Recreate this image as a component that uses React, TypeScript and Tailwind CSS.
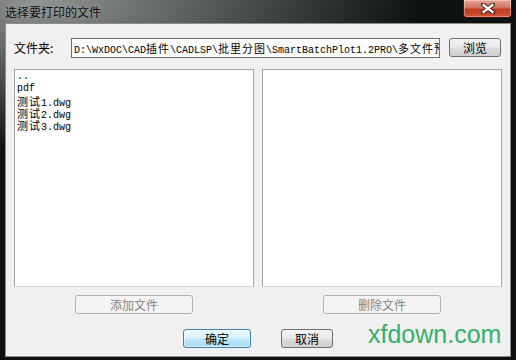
import React from "react";

const cjk = /([\u3400-\u9fff]+)/;

function Mixed({ text }: { text: string }) {
  const parts = text.split(cjk).filter((p) => p.length > 0);
  return (
    <>
      {parts.map((p, i) =>
        cjk.test(p) ? (
          <span key={i} className="shrink-0 leading-[12px] tracking-[1px] font-['Noto_Sans_CJK_SC',sans-serif] text-[11px]">
            {p}
          </span>
        ) : (
          <span key={i} className="shrink-0 leading-[12px] font-['Liberation_Mono',monospace] text-[10px]">
            {p}
          </span>
        )
      )}
    </>
  );
}

function WinButton({
  label,
  width,
  disabled,
  focused,
}: {
  label: string;
  width: string;
  disabled?: boolean;
  focused?: boolean;
}) {
  let cls =
    "border-[#707070] bg-[linear-gradient(#f2f2f2_0%,#ebebeb_48%,#dddddd_52%,#cfcfcf_100%)] text-black";
  if (disabled) cls = "border-[#adb2b5] bg-[#f4f4f4] text-[#838383]";
  if (focused)
    cls =
      "border-[#3c7fb1] bg-[linear-gradient(#eaf6fd_0%,#d9f0fc_48%,#bee6fd_52%,#a7d9f5_100%)] text-black shadow-[inset_0_0_0_1px_rgba(255,255,255,0.6)]";
  return (
    <div
      className={`${width} h-[19px] flex items-center justify-center rounded-[3px] border text-[12px] leading-none font-['Noto_Sans_CJK_SC',sans-serif] ${cls}`}
    >
      {label}
    </div>
  );
}

const files = ["..", "pdf", "测试1.dwg", "测试2.dwg", "测试3.dwg"];

export default function App() {
  return (
    <div className="w-[516px] h-[360px] flex flex-col overflow-hidden bg-[radial-gradient(ellipse_380px_150px_at_40px_0px,#8f9392_0%,#5c605f_40%,#0d1111_100%)]">
      {/* title bar */}
      <div className="h-[23px] flex items-start justify-between pl-[5px] pr-[4px]">
        <span className="mt-[5px] text-[12px] leading-[14px] text-[#101010] font-['Noto_Sans_CJK_SC',sans-serif] [text-shadow:0_0_6px_rgba(255,255,255,0.35)]">
          选择要打印的文件
        </span>
        <div className="w-[49px] h-[18px] rounded-b-[4px] border border-t-0 border-[#4a1208] bg-[linear-gradient(#e8a597_0%,#d27360_45%,#c0391f_55%,#d2553a_100%)] shadow-[inset_0_0_0_1px_rgba(255,255,255,0.35)] flex items-center justify-center">
          <svg width="14" height="11" viewBox="0 0 14 11">
            <path d="M2 1.5 L12 9.5 M12 1.5 L2 9.5" stroke="#3a0d05" strokeWidth="4.2" strokeLinecap="square" />
            <path d="M2.5 2 L11.5 9 M11.5 2 L2.5 9" stroke="#ffffff" strokeWidth="2.4" strokeLinecap="square" />
          </svg>
        </div>
      </div>

      {/* client area */}
      <div className="mx-[5px] h-[334px] border border-[#8c8c8c] bg-[#f0f0f0] flex flex-col">
        <div className="mt-[13px] h-[21px] flex items-center pl-[8px]">
          <span className="w-[57px] text-[12px] text-black font-['Noto_Sans_CJK_SC',sans-serif]">文件夹:</span>
          <div className="w-[369px] h-[20px] bg-white border border-[#6f6f6f] pl-[2px] pt-[3px] flex items-baseline overflow-hidden whitespace-nowrap text-black">
            <Mixed text="D:\WxDOC\CAD插件\CADLSP\批里分图\SmartBatchPlot1.2PRO\多文件预" />
          </div>
          <div className="ml-[9px]">
            <WinButton label="浏览" width="w-[52px]" />
          </div>
        </div>

        <div className="mt-[11px] flex gap-[8px] pl-[8px]">
          <div className="w-[240px] flex flex-col items-center">
            <div className="w-[240px] h-[218px] bg-white border border-[#a3a3a3] border-b-[#d4d4d4] pt-[1px] pl-[2px] text-black">
              {files.map((f) => (
                <div key={f} className="h-[12px] flex items-baseline whitespace-nowrap">
                  <Mixed text={f} />
                </div>
              ))}
            </div>
            <div className="mt-[8px]">
              <WinButton label="添加文件" width="w-[118px]" disabled />
            </div>
          </div>
          <div className="w-[240px] flex flex-col items-center">
            <div className="w-[240px] h-[218px] bg-white border border-[#a3a3a3] border-b-[#d4d4d4]" />
            <div className="mt-[8px]">
              <WinButton label="删除文件" width="w-[118px]" disabled />
            </div>
          </div>
        </div>

        <div className="mt-[15px] flex items-center pl-[177px]">
          <WinButton label="确定" width="w-[68px]" focused />
          <div className="ml-[30px]">
            <WinButton label="取消" width="w-[52px]" />
          </div>
          <span className="ml-[35px] -mt-[9px] text-[25px] leading-none text-[#35b06a] font-['Liberation_Sans',Arial,sans-serif]">
            xfdown.com
          </span>
        </div>
      </div>
    </div>
  );
}
